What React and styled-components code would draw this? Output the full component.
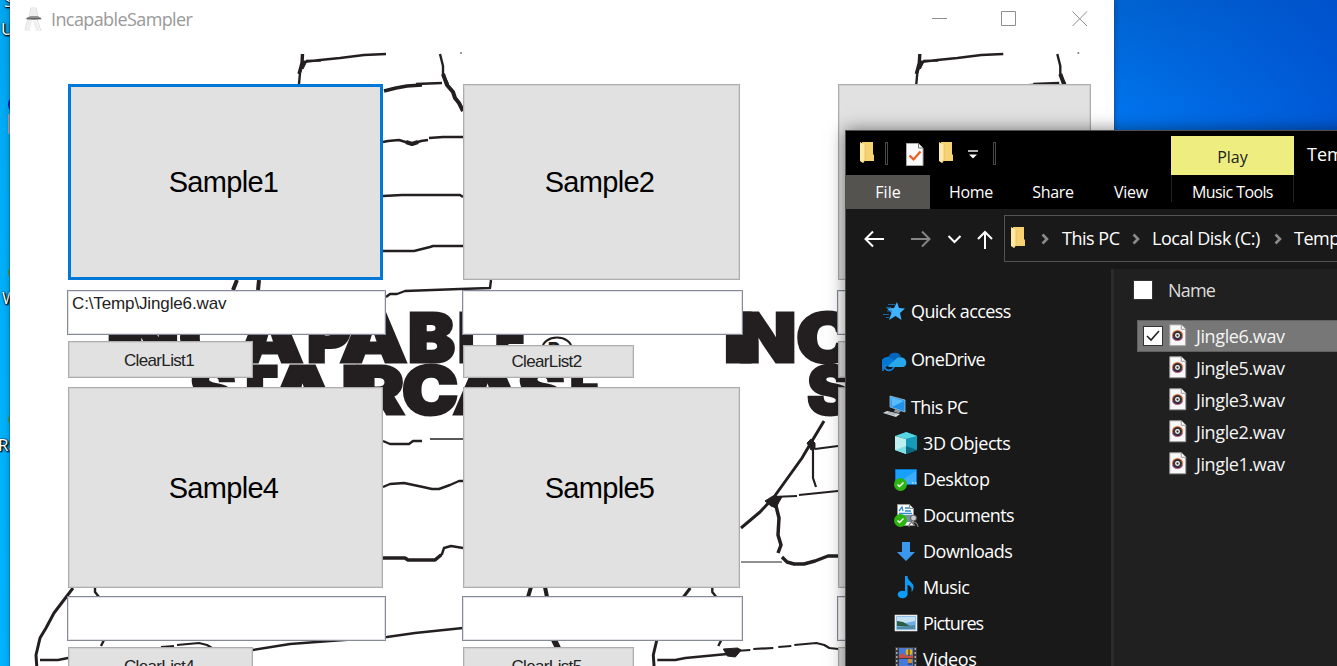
import React from "react";
import styled, { createGlobalStyle } from "styled-components";

const Global = createGlobalStyle`
  html, body { margin: 0; height: 100%; overflow: hidden; }
  * { box-sizing: border-box; }
`;

const ui = `"Open Sans", "Noto Sans", sans-serif`;
const forms = `"Liberation Sans", Arial, sans-serif`;

/* ---------- desktop ---------- */

const Desktop = styled.div`
  position: relative;
  width: 1337px;
  height: 666px;
  overflow: hidden;
  background:
    linear-gradient(90deg, rgba(0, 70, 200, 0) 1110px, rgba(0, 70, 200, 0.6) 1337px),
    linear-gradient(180deg, #0063d0 0, #0078f2 130px, #0078f0 100%);
  font-family: ${ui};
`;

const DesktopEdge = styled.div`
  position: absolute;
  inset: 0 auto 0 0;
  width: 10px;
  background: linear-gradient(180deg, #00a6f0 0, #00aef8 200px, #00b4ff 100%);
`;

const DesktopLabel = styled.span`
  position: absolute;
  left: ${(p) => p.$x}px;
  top: ${(p) => p.$y}px;
  color: #fff;
  font-size: 17px;
  line-height: 20px;
  text-shadow: 1px 1px 1px #000, 1px 1px 2px #000, 0 0 2px #000;
`;

const DesktopSpot = styled.i`
  position: absolute;
  left: 8px;
  top: ${(p) => p.$y}px;
  width: ${(p) => p.$w}px;
  height: ${(p) => p.$h}px;
  background: ${(p) => p.$c};
  border-radius: ${(p) => p.$r || 0};
`;

/* ---------- sampler window ---------- */

const SamplerWindow = styled.section`
  position: absolute;
  left: 10px;
  top: -1px;
  width: 1104px;
  height: 760px;
  background: #fff;
  box-shadow: 0 0 0 1px rgba(20, 70, 120, 0.3), 0 2px 7px rgba(0, 0, 0, 0.28);
  display: flex;
  flex-direction: column;
`;

const TitleBar = styled.header`
  display: flex;
  align-items: center;
  height: 41px;
  flex: none;
  padding: 0 3px 2px 13px;
  color: #999;
  font-size: 18px;
`;

const Title = styled.span`
  margin-left: 7px;
  flex: 1;
  letter-spacing: -0.6px;
`;

const Caption = styled.svg`
  width: 70px;
  height: 40px;
  margin-top: -3px;
  flex: none;
  fill: none;
  stroke: #8f8f8f;
`;

const Client = styled.div`
  position: relative;
  flex: 1;
  overflow: hidden;
`;

const Wallpaper = styled.svg`
  position: absolute;
  left: -10px;
  top: -40px;
  display: block;
  font-family: Inter, sans-serif;
  font-weight: 900;
`;

const Pads = styled.div`
  position: relative;
  display: grid;
  grid-template-columns: 395px 375px 257px;
  grid-template-rows: 303px 303px;
  padding: 44px 0 0 57px;
`;

const Cell = styled.div`
  display: flex;
  flex-direction: column;
  align-items: flex-start;
  font-family: ${forms};
`;

const PadButton = styled.button`
  width: ${(p) => p.$w}px;
  height: ${(p) => p.$h}px;
  margin: 0 0 ${(p) => p.$gap}px 1px;
  padding: 1px 4px 0 0;
  flex: none;
  background: #e1e1e1;
  border: ${(p) => (p.$focus ? "3px solid #0078d7" : "1px solid #adadad")};
  box-shadow: ${(p) => (p.$focus ? "none" : "inset 0 0 0 1px #d2d2d2")};
  font: 29px ${forms};
  letter-spacing: -0.7px;
  color: #000;
`;

const PathBox = styled.div`
  width: ${(p) => p.$w}px;
  height: 45px;
  flex: none;
  border: 1px solid #858a96;
  box-shadow: inset 0 0 0 1px #e2e3e8;
  background: #fff;
  padding: 3px 4px;
  font-size: 17px;
  line-height: 20px;
  letter-spacing: -0.13px;
  color: #222;
  white-space: nowrap;
`;

const ClearButton = styled.button`
  width: ${(p) => p.$w}px;
  height: ${(p) => p.$h}px;
  margin: ${(p) => p.$top}px 0 0 1px;
  padding: ${(p) => p.$pt || 0}px ${(p) => p.$pr || 0}px 0 0;
  flex: none;
  background: #e1e1e1;
  border: 1px solid #adadad;
  box-shadow: inset 0 0 0 1px #d2d2d2;
  font: 17px ${forms};
  letter-spacing: -0.65px;
  color: #222;
`;

const TILE = 617.3;

const brand = [
  ["I", 106, 31, 0], ["N", 121, 58, 0], ["C", 179, 60, 0], ["A", 237, 66, 0],
  ["P", 307, 44, 0], ["A", 340, 67, 0], ["B", 408, 47, 0], ["L", 458, 32, 0],
  ["E", 495, 31, 0],
  ["S", 190, 46, 1], ["T", 232, 46, 1], ["A", 269, 68, 1], ["I", 342, 17, 1],
  ["R", 355, 49, 1], ["C", 402, 56, 1], ["A", 453, 70, 1], ["S", 518, 47, 1],
  ["E", 570, 30, 1],
];

function Letter({ ch, x, w, row }) {
  return (
    <text x={x} y={row ? 414 : 361.5} fontSize={row ? 66 : 68}
      textLength={w} lengthAdjust="spacingAndGlyphs" stroke="#231f20" strokeWidth="3">
      {ch}
    </text>
  );
}

function Tile({ dx }) {
  return (
    <g transform={`translate(${dx} 0)`}>
      <g fill="#231f20">
        {brand.map(([ch, x, w, row]) => (
          <Letter key={ch + x} ch={ch} x={x} w={w} row={row} />
        ))}
        <text x="548" y="355" fontSize="18">R</text>
      </g>
      <g fill="none" stroke="#231f20" strokeWidth="2.4" strokeLinejoin="round">
        <ellipse cx="557" cy="348" rx="14.5" ry="10.5" strokeWidth="2" />
        <path strokeWidth="3.4" d="M302.500 54L302 63L299 74" />
        <path d="M303 63L300 73L299 84M303 62L320 60L340 58L364 55L386 54M306 61L321 60.500" />
        <path d="M301 64l2 5 4-8z" fill="#231f20" strokeWidth="1" />
        <path strokeWidth="3.600" d="M384 91L396 88L407 86L422 85" />
        <path d="M416 84L442 83M440 54L443 66L443 75L448 84" />
        <path strokeWidth="4" d="M443 74L447 85L453 92L455 98L459 103L463 111" />
        <path d="M383 142L388 141L399 140L412 144L421 141L428 140M429 138L443 137L463 137" />
        <path strokeWidth="4" d="M406 142l6 2 6-2" />
        <path d="M383 196L402 195L435 195L460 195L463 197M383 251L414 251L430 247L433 246L463 246" />
        <path d="M491 280L490 288L460 289L405 291L397 294L390 294L386 297" />
        <path strokeWidth="4" d="M237 280L233 290M259 280L258 290M531 587L528 597M545 587L547 597" />
        <path d="M383 441L390 444L409 444L413 441L422 441" />
        <path d="M430 439L463 439" strokeWidth="1.400" />
        <path d="M383 487L390 484L404 483L423 487L432 489L439 489L450 485L459 481L463 481" />
        <path d="M435 560L442 554L444 548L451 546L463 548" />
        <path d="M383 558L405 558L408 560L435 560L441 555" strokeWidth="3.500" />
        <path d="M253 650L290 644L330 641L387 637L415 633L463 628" />
        <path strokeWidth="6" d="M554 640L558 648" />
        <path d="M73 588L54 613L46 628L40 638L36 655L37 670" strokeWidth="3" />
        <path d="M95 588L95 592L99 597M104 640L101 646M40 660L58 660L68 658L110 654" />
        <path d="M106 649L120 648L124 650L118 657L110 656z" fill="#231f20" strokeWidth="1" />
        <path d="M118 651L133 650M136 649L156 648M161 647L174 646M177 645L199 643L207 645L212 648L221 649" strokeWidth="2.200" />
        <g transform="translate(-617.3 0)">
          <path d="M824 421L812 441L802 458L774 497L760 512L741 528" strokeWidth="3" />
          <path d="M807 443l4-4 4 4 0 6-4 1z" fill="#231f20" strokeWidth="1" />
          <path d="M813 446L813 478L816 487M815 449L838 446" strokeWidth="2.200" />
          <path d="M772 497L797 496M799 495L838 491" strokeWidth="1.800" />
          <path d="M765 501L773 496L782 497L779 502L776 508L771 506z" fill="#231f20" strokeWidth="1" />
          <path d="M775 502L779 518L778 535L781 545L778 553" strokeWidth="3.500" />
          <path d="M741 562L782 562" strokeWidth="1.200" />
          <path d="M782 557L787 562L794 564L804 564L815 561L828 556L838 556" strokeWidth="3.400" />
        </g>
      </g>
      <circle cx="461" cy="53" r="1" fill="#777" />
    </g>
  );
}

const columns = [
  { w: 315, box: 319, clear: 185, tops: [6, 6], heights: [37, 40], pr: 3, pt: 2 },
  { w: 277, box: 281, clear: 171, tops: [10, 6], heights: [33, 40], pr: 4 },
  { w: 253, box: 257, clear: 150, tops: [6, 6], heights: [37, 40] },
];

const rows = [
  { h: 196, gap: 10 },
  { h: 201, gap: 8 },
];

const RowPads = ({ row }) =>
  columns.map((c, i) => {
    const n = row * 3 + i + 1;
    return (
      <Cell key={n}>
        <PadButton $w={c.w} $h={rows[row].h} $gap={rows[row].gap} $focus={n === 1}>
          {n % 3 ? `Sample${n}` : null}
        </PadButton>
        <PathBox $w={c.box}>{n === 1 ? "C:\\Temp\\Jingle6.wav" : null}</PathBox>
        <ClearButton $w={c.clear} $h={c.heights[row]} $top={c.tops[row]} $pr={c.pr} $pt={row ? 0 : c.pt}>
          {n % 3 ? `ClearList${n}` : null}
        </ClearButton>
      </Cell>
    );
  });

function Sampler() {
  return (
    <SamplerWindow>
      <TitleBar>
        <svg width="21" height="26" viewBox="0 0 21 26">
          <path d="M8 1h5l2 9H7zM5 13L2 25h5l2-11zM13 14l4 11h-4l-3-10z" fill="#efefef" />
          <path d="M5 12l-3 12M18 25l-4-12M8 2l-2 8M13 2l2 8" fill="none" stroke="#e0e0e0" />
          <path d="M2 13l5-3h8l4 3-8 1z" fill="#999" />
          <path d="M4 12.500h14" stroke="#666" strokeWidth="1.500" />
        </svg>
        <Title>IncapableSampler</Title>
        <Caption viewBox="0 0 70 40"><path d="M31 21.500h15" /></Caption>
        <Caption viewBox="0 0 70 40"><path d="M30.500 14.500h14v14h-14z" /></Caption>
        <Caption viewBox="0 0 70 40"><path d="M31.500 14.500l14.500 14.500M46 14.500L31.500 29" /></Caption>
      </TitleBar>
      <Client>
        <Wallpaper width="1114" height="700">
          <Tile dx={0} />
          <Tile dx={TILE} />
        </Wallpaper>
        <Pads>
          <RowPads row={0} />
          <RowPads row={1} />
        </Pads>
      </Client>
    </SamplerWindow>
  );
}

/* ---------- explorer window ---------- */

const ExplorerWindow = styled.section`
  position: absolute;
  left: 845px;
  top: 130px;
  width: 560px;
  height: 620px;
  border: 1px solid #50504e;
  background: #191919;
  color: #fff;
  box-shadow: 0 0 16px rgba(0, 0, 0, 0.5);
  display: flex;
  flex-direction: column;
`;

const Ribbon = styled.header`
  display: flex;
  height: 78px;
  flex: none;
  background: #000;
  font-size: 16px;
`;

const RibbonLeft = styled.div`
  width: 325px;
  flex: none;
  display: flex;
  flex-direction: column;
`;

const QuickBar = styled.div`
  display: flex;
  align-items: center;
  height: 44px;
  padding-left: 13px;
`;

const Tabs = styled.nav`
  display: flex;
  height: 34px;
`;

const Tab = styled.span`
  width: ${(p) => p.$w}px;
  line-height: 34px;
  text-align: center;
  background: ${(p) => (p.$active ? "#555350" : "transparent")};
  letter-spacing: ${(p) => p.$ls || 0}px;
`;

const ToolGroup = styled.div`
  width: 123px;
  flex: none;
  padding-top: 5px;
  text-align: center;
`;

const PlayTab = styled.div`
  height: 39px;
  line-height: 43px;
  background: #eeed80;
  color: #222;
`;

const ToolName = styled.div`
  height: 27px;
  line-height: 34px;
  border: solid #222;
  border-width: 0 1px;
  letter-spacing: -0.6px;
`;

const WindowTitle = styled.div`
  padding: 11px 0 0 13px;
  font-size: 18px;
  line-height: 24px;
  white-space: nowrap;
`;

const NavBar = styled.div`
  display: flex;
  height: 60px;
  flex: none;
  padding-top: 6px;
`;

const Arrows = styled.svg`
  width: 158px;
  height: 47px;
  flex: none;
  fill: none;
  stroke: #fff;
  stroke-width: 2;
`;

const Address = styled.div`
  flex: 1;
  display: flex;
  align-items: center;
  height: 47px;
  margin-right: -2px;
  padding: 0 0 1px 5px;
  border: 1px solid #535353;
  font-size: 18px;
  white-space: nowrap;
`;

const Crumb = styled.span`
  width: ${(p) => p.$w}px;
  letter-spacing: -0.48px;
  flex: none;
`;

const Chevron = styled.svg`
  width: 8px;
  height: 12px;
  flex: none;
  margin: 2px ${(p) => p.$r}px 0 ${(p) => p.$l}px;
  fill: none;
  stroke: #8b8b8b;
  stroke-width: 2.6;
`;

const Body = styled.div`
  display: flex;
  flex: 1;
`;

const Tree = styled.aside`
  width: 265px;
  flex: none;
  padding-top: 18px;
`;

const TreeRow = styled.div`
  display: flex;
  align-items: center;
  height: ${(p) => (p.$root ? 48 : 36)}px;
  padding-left: ${(p) => (p.$root ? 36 : 48)}px;
  font-size: 18px;
  letter-spacing: ${(p) => p.$ls}px;
  white-space: nowrap;

  svg {
    flex: none;
    margin: 1px 4px 0 0;
  }
`;

const TreeChildren = styled.div`
  margin-top: -6px;
`;

const Files = styled.main`
  flex: 1;
  background: #202020;
  border-left: 3px solid #2b2b2b;
`;

const FilesHead = styled.div`
  display: flex;
  align-items: center;
  height: 44px;
  padding: 0 0 2px 19px;
  font-size: 18px;
  color: #dedede;
  letter-spacing: -0.8px;
`;

const FileList = styled.div`
  padding: 7px 0 0 23px;
`;

const FileRow = styled.div`
  display: flex;
  align-items: center;
  height: 32px;
  padding-left: 5px;
  font-size: 18px;
  letter-spacing: -0.38px;
  color: #f4f4f4;
  border: 1px solid ${(p) => (p.$on ? "#606060" : "transparent")};
  background: ${(p) => (p.$on ? "#777" : "transparent")};
`;

const Check = styled.svg`
  width: 20px;
  height: 20px;
  flex: none;
  margin: -1px ${(p) => p.$gap}px 0 0;
  background: ${(p) => (p.$hidden ? "none" : "#fff")};
  border: 1px solid ${(p) => (p.$hidden ? "transparent" : "#333")};
  fill: none;
  stroke: #222;
  stroke-width: 1.6;
`;

const Folder = () => (
  <svg width="16" height="22" viewBox="0 0 16 22">
    <path d="M3 0h11v12l1 1v6H4z" fill="#f6d273" />
    <path d="M1 0l5 3v15l-2 3-3-2z" fill="#ffe9a6" />
    <path d="M6 3v15l-2 3" fill="none" stroke="#e0b450" strokeWidth=".6" />
  </svg>
);

const Bar = styled.i`
  width: 3px;
  height: 23px;
  flex: none;
  border: 1px solid #4a4a4a;
  margin-left: ${(p) => p.$l}px;
`;

const PageIcon = styled.svg`
  flex: none;
  margin: 2px 14px 0 18px;
`;

const MoreMark = styled.svg`
  margin: 4px 0 0 14px;
`;

const Badge = () => (
  <g>
    <circle cx="6.500" cy="17.500" r="6.500" fill="#2db410" />
    <path d="M3.500 17.500l2 2 4-4" fill="none" stroke="#fff" strokeWidth="1.400" />
  </g>
);

const treeIcons = {
  quick: (
    <g>
      <path d="M15 3l2 6 6 .5-5 4.500 1.500 7-6-4-6.500 4 2.500-7L5 9.500 12 9z" fill="#3fb3ff" />
      <path d="M6 5.500h7M4 8.500h5M5 12h5M1 15.500h6M4 18.500h3" stroke="#1668a8" strokeWidth="1" />
    </g>
  ),
  cloud: (
    <g transform="translate(-1 0)">
      <path d="M7 11a7 6.500 0 0 1 13-2l-6 7z" fill="#0364b8" />
      <path d="M1 19a6 6 0 0 1 6-9c4 0 7 4 12 9z" fill="#0078d4" />
      <path d="M7 19l9-8a6 5 0 0 1 9 3c1 4-1 6-4 6H8z" fill="#28a8ea" />
      <path d="M2 24v-5h4M3 20c3 5 8 4 10 0" fill="none" stroke="#1484e0" strokeWidth="1.600" />
    </g>
  ),
  pc: (
    <g>
      <path d="M8 1l15 4v12L8 12z" fill="#1f91ea" stroke="#b7d4e7" strokeWidth=".7" />
      <path d="M9 2l13 4-12 6z" fill="#5abaff" />
      <path d="M13 14l6 2-2 2-5-1z" fill="#8998a5" />
      <path d="M1 18l4-2 13 3-4 3z" fill="#d6dbdf" />
      <path d="M4 18l9 2M6 17l9 2" stroke="#8a939a" strokeWidth=".7" />
    </g>
  ),
  cube: (
    <g>
      <path d="M12 1l11 4v14l-11-7z" fill="#23b5c9" />
      <path d="M1 5l11-4 11 4-11 3z" fill="#55d8e2" />
      <path d="M1 5l11 3v15L1 19z" fill="#bdeff0" />
      <path d="M12 8l11-3v14l-11 4z" fill="#159bb8" />
      <path d="M12 15l11 4-11 4z" fill="#0a6880" />
      <path d="M12 15v8L1 19z" fill="#7fdfe5" />
    </g>
  ),
  desktop: (
    <g>
      <path d="M1.500 2.500h21v15h-21z" fill="#18a0ff" stroke="#0876c8" />
      <path d="M2 17L22 4v13z" fill="#3baeff" />
      <path d="M18 16h1.500M21 16h1.500" stroke="#fff" />
      <Badge />
    </g>
  ),
  docs: (
    <g>
      <path d="M3.500 1.500h12l4 4v17h-16z" fill="#fff" stroke="#999" />
      <path d="M15.500 1.500v4h4" fill="none" stroke="#888" />
      <path d="M5 8l3-4 1 4M11 5h4M11 8h6M5 10.500h13M5 13h6" fill="none" stroke="#2f8bcf" strokeWidth="1.300" />
      <path d="M11 12h7v7h-7z" fill="#7891a0" />
      <circle cx="19.500" cy="15" r="3" fill="#ccc" stroke="#555" />
      <path d="M15 24c0-6 8-7 9 0M17 18l4 5" fill="none" stroke="#777" strokeWidth="1.300" />
      <Badge />
    </g>
  ),
  down: <path d="M8 3h8v10h5l-9 9L3 13h5z" fill="#3b97ec" />,
  music: (
    <g fill="#0d9cf5">
      <ellipse cx="8.500" cy="19.500" rx="4.800" ry="3.800" />
      <path d="M11 1h2.500c0 6 7 6 6 12-.5 2-1 3-2 4 1-5-2-7-4-7v10H11z" />
    </g>
  ),
  pics: (
    <g>
      <path d="M1.500 4.500h21v15h-21z" fill="#6fb0e2" stroke="#eee" strokeWidth="1.600" />
      <path d="M3 6h18v4l-10 2-8-2z" fill="#c7e2f5" />
      <path d="M3 10l6 1 7 4H3z" fill="#2c5b46" />
      <path d="M3 16l18-2v4H3z" fill="#4f8aa5" />
    </g>
  ),
  videos: (
    <g>
      <path d="M1 0h22v24H1z" fill="#3a3a3a" />
      <path d="M5 1h14v10H5zM5 12h14v12H5z" fill="#4779d8" />
      <path d="M2 2h1.500M2 6h1.500M2 10h1.500M2 14h1.500M2 18h1.500M20.500 2H22M20.500 6H22M20.500 10H22M20.500 14H22M20.500 18H22" stroke="#aaa" strokeWidth="2" />
      <path d="M5 9l3-3 3 2 4 1 4-1v3H5z" fill="#c8504a" />
      <circle cx="15" cy="5" r="3.300" fill="#e8b51d" />
      <circle cx="16" cy="14" r="2.300" fill="#d89020" />
      <path d="M15 2v7M14 17h4" stroke="#222" />
    </g>
  ),
};

const places = [
  ["Quick access", "quick", -0.6],
  ["OneDrive", "cloud", -0.65],
  ["This PC", "pc", -0.6],
];

const folders = [
  ["3D Objects", "cube", -0.4],
  ["Desktop", "desktop", -0.4],
  ["Documents", "docs", -0.6],
  ["Downloads", "down", -0.5],
  ["Music", "music", -0.55],
  ["Pictures", "pics", -0.9],
  ["Videos", "videos", -0.4],
];

const Place = ({ name, icon, ls, root }) => (
  <TreeRow $root={root} $ls={ls}>
    <svg width="25" height="25" viewBox="0 0 25 25">{treeIcons[icon]}</svg>
    {name}
  </TreeRow>
);

const AudioIcon = () => (
  <svg width="18" height="23" viewBox="0 0 18 23">
    <path d="M.75.75h11.500l4.500 4.500v16.500H.75z" fill="#f8f8f8" stroke="#9a9a9a" />
    <path d="M12.250.75v4.500h4.500" fill="#fff" stroke="#9a9a9a" />
    <circle cx="8.500" cy="11.500" r="5.600" fill="#e5733a" />
    <path d="M3.200 13a5.600 5.600 0 0 0 10.600 0z" fill="#9651aa" />
    <circle cx="8.500" cy="11.500" r="4.500" fill="#303038" />
    <circle cx="8.500" cy="11.500" r="1.800" fill="#303038" stroke="#fff" strokeWidth="1.300" />
  </svg>
);

const FileIcon = styled.span`
  display: flex;
  margin: -1px 9px 0 0;
`;

const files = ["Jingle6.wav", "Jingle5.wav", "Jingle3.wav", "Jingle2.wav", "Jingle1.wav"];

function Explorer() {
  return (
    <ExplorerWindow>
      <Ribbon>
        <RibbonLeft>
          <QuickBar>
            <Folder />
            <Bar $l={10} />
            <PageIcon width="18" height="23" viewBox="0 0 18 23">
              <path d="M.5.500h12l4.500 4.500v17.500H.5z" fill="#fafafa" stroke="#aaa" />
              <path d="M12.500.5v4.500H17" fill="none" stroke="#777" />
              <path d="M3.500 12.500l4 4 7-8" fill="none" stroke="#f05a1c" strokeWidth="2.200" />
            </PageIcon>
            <Folder />
            <MoreMark width="10" height="10" viewBox="0 0 10 10">
              <path d="M0 1h10" stroke="#fff" strokeWidth="1.400" />
              <path d="M1 4.500h8L5 8.500z" fill="#fff" />
            </MoreMark>
            <Bar $l={15} />
          </QuickBar>
          <Tabs>
            <Tab $w={84} $active>File</Tab>
            <Tab $w={82} $ls={-0.3}>Home</Tab>
            <Tab $w={82} $ls={-0.3}>Share</Tab>
            <Tab $w={74} $ls={-0.2}>View</Tab>
          </Tabs>
        </RibbonLeft>
        <ToolGroup>
          <PlayTab>Play</PlayTab>
          <ToolName>Music Tools</ToolName>
        </ToolGroup>
        <WindowTitle>Temp</WindowTitle>
      </Ribbon>
      <NavBar>
        <Arrows viewBox="0 0 158 47">
          <path d="M38 24H20M27 16.500L19.500 24l7.500 7.500" />
          <path d="M65 24h18M76 16.500l7.500 7.500-7.500 7.500" stroke="#858585" />
          <path d="M102.500 21l6 6 6-6" />
          <path d="M139 34V17M132 24l7-7 7 7" />
        </Arrows>
        <Address>
          <Folder />
          <Chevron viewBox="0 0 8 12" $l={15} $r={13}><path d="M1.500 1.500L6 6l-4.500 4.500" /></Chevron>
          <Crumb $w={58}>This PC</Crumb>
          <Chevron viewBox="0 0 8 12" $l={12} $r={12}><path d="M1.500 1.500L6 6l-4.500 4.500" /></Chevron>
          <Crumb $w={110}>Local Disk (C:)</Crumb>
          <Chevron viewBox="0 0 8 12" $l={12} $r={12}><path d="M1.500 1.500L6 6l-4.500 4.500" /></Chevron>
          <Crumb $w={60}>Temp</Crumb>
        </Address>
      </NavBar>
      <Body>
        <Tree>
          {places.map(([name, icon, ls]) => (
            <Place key={name} name={name} icon={icon} ls={ls} root />
          ))}
          <TreeChildren>
            {folders.map(([name, icon, ls]) => (
              <Place key={name} name={name} icon={icon} ls={ls} />
            ))}
          </TreeChildren>
        </Tree>
        <Files>
          <FilesHead>
            <Check $gap={15} />
            Name
          </FilesHead>
          <FileList>
            {files.map((name, i) => (
              <FileRow key={name} $on={i === 0}>
                <Check $gap={6} $hidden={i > 0} viewBox="0 0 18 18">
                  {i === 0 && <path d="M3 9l4 4 8-9" />}
                </Check>
                <FileIcon><AudioIcon /></FileIcon>
                {name}
              </FileRow>
            ))}
          </FileList>
        </Files>
      </Body>
    </ExplorerWindow>
  );
}

export default function App() {
  return (
    <>
      <Global />
      <Desktop>
        <DesktopEdge />
        <DesktopLabel $x={4} $y={-9}>S</DesktopLabel>
        <DesktopLabel $x={1} $y={19}>U</DesktopLabel>
        <DesktopLabel $x={2} $y={288}>W</DesktopLabel>
        <DesktopLabel $x={-2} $y={435}>Ra</DesktopLabel>
        <DesktopSpot $y={95} $w={18} $h={19} $c="#0618cf" $r="50%" />
        <DesktopSpot $y={114} $w={6} $h={20} $c="#a9a5ad" />
        <DesktopSpot $y={267} $w={10} $h={11} $c="#4a9628" $r="50%" />
        <DesktopSpot $y={414} $w={10} $h={11} $c="#4a9628" $r="50%" />
        <Sampler />
        <Explorer />
      </Desktop>
    </>
  );
}
